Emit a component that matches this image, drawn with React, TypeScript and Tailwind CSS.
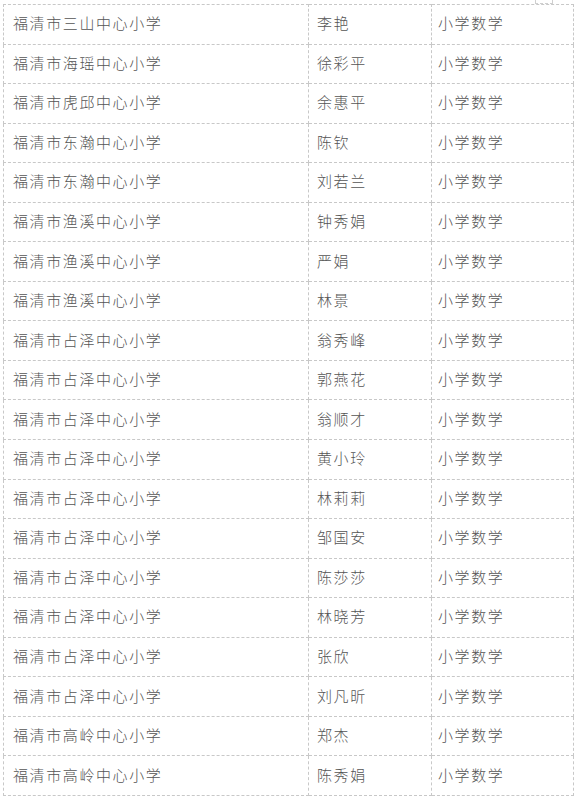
import React from "react";

const rows: [string, string][] = [
  ["福清市三山中心小学", "李艳"],
  ["福清市海瑶中心小学", "徐彩平"],
  ["福清市虎邱中心小学", "余惠平"],
  ["福清市东瀚中心小学", "陈钦"],
  ["福清市东瀚中心小学", "刘若兰"],
  ["福清市渔溪中心小学", "钟秀娟"],
  ["福清市渔溪中心小学", "严娟"],
  ["福清市渔溪中心小学", "林景"],
  ["福清市占泽中心小学", "翁秀峰"],
  ["福清市占泽中心小学", "郭燕花"],
  ["福清市占泽中心小学", "翁顺才"],
  ["福清市占泽中心小学", "黄小玲"],
  ["福清市占泽中心小学", "林莉莉"],
  ["福清市占泽中心小学", "邹国安"],
  ["福清市占泽中心小学", "陈莎莎"],
  ["福清市占泽中心小学", "林晓芳"],
  ["福清市占泽中心小学", "张欣"],
  ["福清市占泽中心小学", "刘凡昕"],
  ["福清市高岭中心小学", "郑杰"],
  ["福清市高岭中心小学", "陈秀娟"],
];

export default function App() {
  return (
    <div className="w-[576px] h-[801px] bg-white overflow-hidden relative">
      <div className="absolute left-[535px] top-0 w-[18px] h-[4px] border-b border-l border-r border-dashed border-[#cfcfcf]" />
      <div className="pt-[4px] pl-[3px]">
        <table
          className="border-collapse table-fixed w-[570px] text-[15px] text-[#555] font-light tracking-[1.6px]"
          style={{ fontFamily: '"Noto Sans CJK SC", "Noto Sans", sans-serif' }}
        >
          <colgroup>
            <col className="w-[305px]" />
            <col className="w-[123px]" />
            <col className="w-[142px]" />
          </colgroup>
          <tbody>
            {rows.map(([school, name], i) => (
              <tr key={i} className="h-[39.55px]">
                <td className="border border-dashed border-[#c8c8c8] pl-[9px] pb-[3px] leading-none whitespace-nowrap">{school}</td>
                <td className="border border-dashed border-[#c8c8c8] pl-[8px] pb-[3px] leading-none whitespace-nowrap">{name}</td>
                <td className="border border-dashed border-[#c8c8c8] pl-[6px] pb-[3px] leading-none whitespace-nowrap">小学数学</td>
              </tr>
            ))}
          </tbody>
        </table>
      </div>
    </div>
  );
}
